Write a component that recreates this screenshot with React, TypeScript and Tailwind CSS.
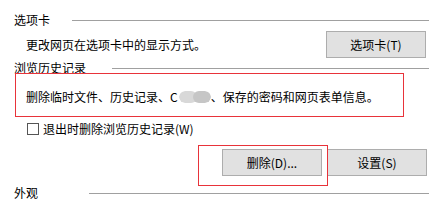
import React from "react";

const font = { fontFamily: '"Noto Sans CJK SC", "Microsoft YaHei", sans-serif' };

function Header({ title, gap }: { title: string; gap: string }) {
  return (
    <div className="flex items-center h-4 pl-[14px] pr-[9px]">
      <span className="text-[12px] leading-4 text-[#000]">{title}</span>
      <div className={`flex-1 h-px bg-[#a0a0a0] ${gap}`} />
    </div>
  );
}

function Btn({ label }: { label: string }) {
  return (
    <button className="w-[100px] h-[27px] border border-[#adadad] bg-[#e1e1e1] text-[12px] leading-4 text-black flex items-center justify-center">
      {label}
    </button>
  );
}

export default function App() {
  return (
    <div className="relative w-[438px] h-[204px] bg-white overflow-hidden text-black" style={font}>
      <div className="pt-3">
        <Header title="选项卡" gap="ml-[22px]" />
        <div className="flex items-center justify-between pl-[26px] pr-[12px] mt-[3px]">
          <span className="text-[12px] leading-4 mt-[1px]">更改网页在选项卡中的显示方式。</span>
          <Btn label="选项卡(T)" />
        </div>
        <div className="mt-[2px]">
          <Header title="浏览历史记录" gap="ml-[26px]" />
        </div>
        <div className="pl-[26px] mt-[13px] flex items-center text-[12px] leading-4">
          <span>删除临时文件、历史记录、C</span>
          <span className="inline-flex h-3 w-8 rounded-full overflow-hidden blur-[0.5px] ml-[1px]">
            <span className="flex-1 bg-[#d8d8d8] rounded-full" />
            <span className="flex-1 bg-[#c6c6c6] rounded-full -ml-1" />
          </span>
          <span>、保存的密码和网页表单信息。</span>
        </div>
        <div className="pl-[27px] mt-[16px] flex items-center text-[12px] leading-4">
          <span className="w-3 h-3 border border-[#555] bg-white" />
          <span className="ml-[4px]">退出时删除浏览历史记录(W)</span>
        </div>
        <div className="flex justify-end gap-[5px] pr-[11px] mt-[12px]">
          <Btn label="删除(D)..." />
          <Btn label="设置(S)" />
        </div>
        <div className="mt-[9px]">
          <Header title="外观" gap="ml-[51px]" />
        </div>
      </div>
      <div className="absolute left-[15px] top-[73px] w-[389px] h-[44px] border border-[#e8333a]" />
      <div className="absolute left-[198px] top-[145px] w-[130px] h-[41px] border border-[#e8333a]" />
    </div>
  );
}
